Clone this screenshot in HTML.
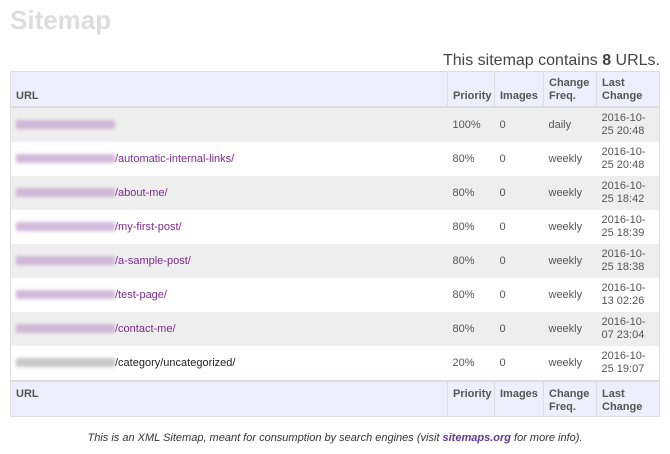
<!DOCTYPE html>
<html><head><style>
body{margin:0;width:670px;height:454px;background:#fff;font-family:"Liberation Sans",Arial,sans-serif;color:#555;position:relative;overflow:hidden}
h1{position:absolute;left:10px;top:5px;margin:0;font-size:26px;font-weight:bold;color:#ddd}
.cnt{position:absolute;right:10px;top:52px;font-size:16px;color:#444}
table{position:absolute;left:10px;top:71px;width:650px;border-collapse:collapse;font-size:11px;table-layout:fixed;border:1px solid #ddd}
th{background:#eeeefc;color:#555;text-align:left;font-weight:bold;padding:0 5px 3px;height:31px;border-left:1px solid #ddd;vertical-align:bottom;line-height:13px}
th:first-child{border-left:none}
thead tr{border-bottom:2px solid #ddd}
tfoot tr{border-top:2px solid #ddd}
tfoot th{vertical-align:top;padding:6px 5px 0;height:28px}
td{padding:0 5px;height:34px;line-height:13px;color:#555}
tbody tr:nth-child(odd) td{background:#eee}
.u{color:#7b2a8e}
.b{display:inline-block;width:99px;height:9px;vertical-align:middle;background:#c9a9d2;filter:blur(1.5px);opacity:.8}
.g{background:#bbb}
.foot{position:absolute;left:0;width:670px;top:432px;text-align:center;font-size:11px;font-style:italic;color:#333}
.foot b{color:#5a3d8e}
</style></head><body>
<h1>Sitemap</h1>
<div class="cnt">This sitemap contains <b>8</b> URLs.</div>
<table>
<colgroup><col style="width:437px"><col style="width:47px"><col style="width:49px"><col style="width:53px"><col></colgroup>
<thead><tr><th>URL</th><th>Priority</th><th>Images</th><th>Change Freq.</th><th>Last Change</th></tr></thead>
<tbody>
<tr><td class="u"><span class="b"></span></td><td>100%</td><td>0</td><td>daily</td><td>2016-10-25 20:48</td></tr>
<tr><td class="u"><span class="b"></span>/automatic-internal-links/</td><td>80%</td><td>0</td><td>weekly</td><td>2016-10-25 20:48</td></tr>
<tr><td class="u"><span class="b"></span>/about-me/</td><td>80%</td><td>0</td><td>weekly</td><td>2016-10-25 18:42</td></tr>
<tr><td class="u"><span class="b"></span>/my-first-post/</td><td>80%</td><td>0</td><td>weekly</td><td>2016-10-25 18:39</td></tr>
<tr><td class="u"><span class="b"></span>/a-sample-post/</td><td>80%</td><td>0</td><td>weekly</td><td>2016-10-25 18:38</td></tr>
<tr><td class="u"><span class="b"></span>/test-page/</td><td>80%</td><td>0</td><td>weekly</td><td>2016-10-13 02:26</td></tr>
<tr><td class="u"><span class="b"></span>/contact-me/</td><td>80%</td><td>0</td><td>weekly</td><td>2016-10-07 23:04</td></tr>
<tr><td style="color:#222"><span class="b g"></span>/category/uncategorized/</td><td>20%</td><td>0</td><td>weekly</td><td>2016-10-25 19:07</td></tr>
</tbody>
<tfoot><tr><th>URL</th><th>Priority</th><th>Images</th><th>Change Freq.</th><th>Last Change</th></tr></tfoot>
</table>
<div class="foot">This is an XML Sitemap, meant for consumption by search engines (visit <b>sitemaps.org</b> for more info).</div>
</body></html>
